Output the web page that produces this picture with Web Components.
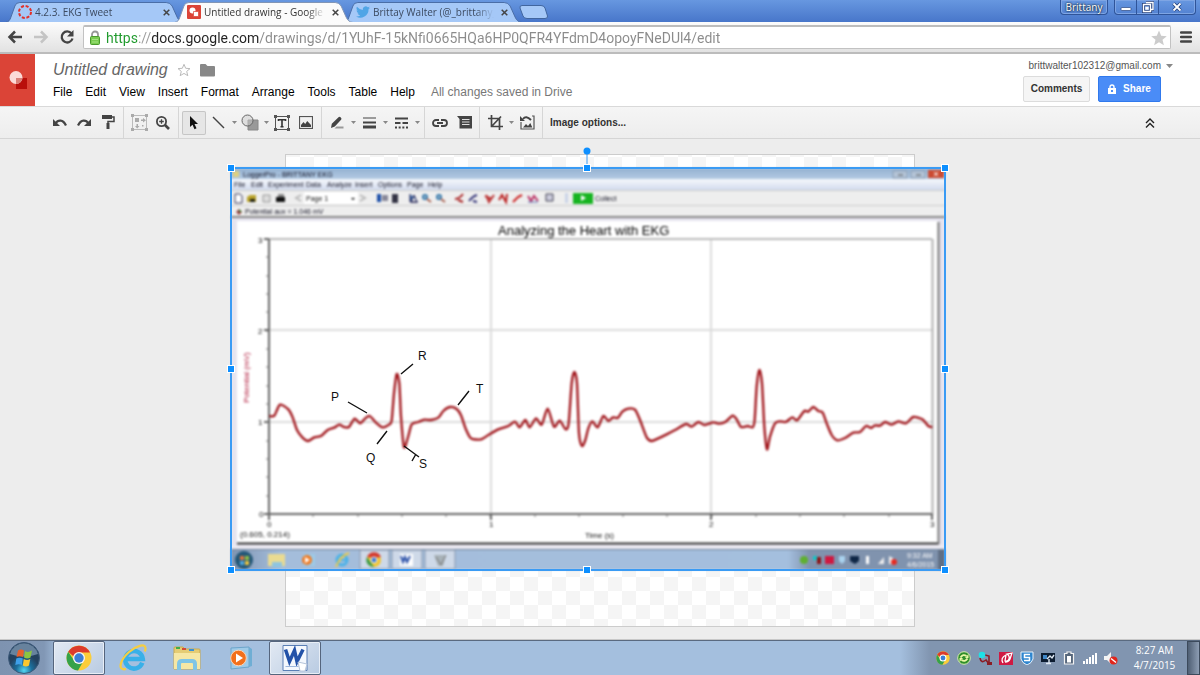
<!DOCTYPE html>
<html lang="en">
<head>
<meta charset="utf-8">
<title>Untitled drawing - Google Drawings</title>
<style>
  html, body { margin: 0; height: 100%; }
  body { font-family: "Liberation Sans", Arial, sans-serif; background: #eee; overflow: hidden; }
</style>
</head>
<body>
<desktop-screen></desktop-screen>

<script>
const define = (name, html, setup) => {
  const template = document.createElement('template');
  template.innerHTML = html;
  customElements.define(name, class extends HTMLElement {
    constructor() {
      super();
      this.attachShadow({ mode: 'open' }).append(template.content.cloneNode(true));
    }
    connectedCallback() { if (setup) setup(this, this.shadowRoot); }
  });
};

const base = `*,:host{box-sizing:border-box} button{font:inherit;color:inherit;background:none;border:0;padding:0;margin:0} svg{display:block}`;

/* ---------- browser chrome ---------- */
define('browser-tab', `
<style>${base}
:host{display:block;position:relative;width:178px;height:20px;margin-right:-9px;color:#3c4a60;z-index:1}
:host([active]){z-index:2;color:#333}
.shape{position:absolute;inset:0;width:100%;height:100%}
.shape path{fill:#a5c8f7;stroke:#4a6da6}
:host([active]) .shape path{fill:#fbfbfb;stroke:#8094b5}
.row{position:relative;display:flex;align-items:center;height:100%;padding:0 11px 0 12px;gap:3px}
::slotted(svg){display:block;width:14px;height:14px;flex:none}
.t{flex:1;min-width:0;font-size:10px;line-height:18px;white-space:nowrap;overflow:hidden;text-align:left;
 -webkit-mask-image:linear-gradient(90deg,#000 85%,transparent);}
.x{width:14px;height:14px;display:grid;place-items:center;flex:none}
</style>
<svg class="shape" viewBox="0 0 180 20" preserveAspectRatio="none"><path d="M-1 20.5C3 20 4 18 5 15L9 4Q10 .5 14 .5H162Q166 .5 168 4L173 15Q175 20 180 20.5"/></svg>
<div class="row"><slot name="icon"></slot><button class="t" role="tab"><slot></slot></button>
<button class="x" aria-label="Close tab"><svg width="7" height="7" viewBox="0 0 7 7"><path d="M.7.7l5.6 5.6M6.3.7L.7 6.3" stroke="#444" stroke-width="1.5"/></svg></button></div>`);

define('browser-tabs', `
<style>${base}
:host{display:flex;height:22px;padding:2px 4px 0 6px;background:linear-gradient(#6797e0,#4876ca);font-family:"Open Sans","Noto Sans",sans-serif}
.new{width:30px;height:14px;margin:3px 0 0 6px;position:relative;z-index:3}
.win{margin-left:auto;display:flex;gap:6px;height:13px;margin-top:-2px;color:#fff;font-size:10px;line-height:15px}
.user,.ctl{height:15px;border:1px solid #2f5499;border-top:0;border-radius:0 0 4px 4px;box-shadow:inset 0 0 0 1px #7ea5e4}
.user{width:48px;text-align:center;text-shadow:0 0 2px #123,0 0 2px #123}
.ctl{display:flex}
.ctl button{width:22px;height:14px;display:grid;place-items:center;border-right:1px solid #2f5499}
.ctl button:last-child{width:36px;border:0}
</style>
<browser-tab><svg slot="icon" viewBox="0 0 14 14"><circle cx="7" cy="7" r="6" fill="none" stroke="#e2302a" stroke-width="2" stroke-dasharray="3 1.7"/></svg>4.2.3. EKG Tweet</browser-tab>
<browser-tab active><svg slot="icon" viewBox="0 0 14 14"><rect width="14" height="14" rx="1" fill="#db4437"/><circle cx="5.5" cy="5.5" r="3" fill="#fff"/><path d="M6.5 6.5h5v5h-5z" fill="#fff" stroke="#db4437" stroke-width=".7"/></svg>Untitled drawing - Google Drawings</browser-tab>
<browser-tab><svg slot="icon" viewBox="0 0 24 24"><path fill="#50a5e6" d="M24 4.6a10 10 0 0 1-2.8.8 5 5 0 0 0 2.1-2.7 10 10 0 0 1-3.1 1.2 4.9 4.9 0 0 0-8.4 4.5A14 14 0 0 1 1.7 3.1a4.9 4.9 0 0 0 1.5 6.6 5 5 0 0 1-2.2-.6 4.9 4.9 0 0 0 3.9 4.9 5 5 0 0 1-2.2.1 4.9 4.9 0 0 0 4.6 3.4A9.900 9.900 0 0 1 0 19.500a14 14 0 0 0 21.500-12.400A10 10 0 0 0 24 4.600z"/></svg>Brittay Walter (@_brittany_w)</browser-tab>
<button class="new" aria-label="New tab"><svg width="30" height="14" viewBox="0 0 30 14"><path d="M3 .5H22Q25 .5 26 3L28.500 11Q29 13.500 26 13.500H8Q5 13.500 4 11L1 3Q.5.5 3 .5z" fill="#a5c8f7" stroke="#41669f"/></svg></button>
<div class="win"><button class="user">Brittany</button><div class="ctl">
<button aria-label="Minimize"><svg width="12" height="12"><rect x="1" y="6.500" width="10" height="3" rx="1" fill="#fff" stroke="#2a4680" stroke-width=".7"/></svg></button>
<button aria-label="Restore"><svg width="12" height="12"><path d="M4 1.500h7v7H9M1.500 3.500h7v7h-7z" fill="none" stroke="#26427c" stroke-width="3"/><path d="M4 1.500h7v7H9M1.500 3.500h7v7h-7zM4 6.500h2v1.500H4z" fill="none" stroke="#fff" stroke-width="1.400"/></svg></button>
<button aria-label="Close"><svg width="10" height="10"><path d="M1.500 1.500l7 7M8.500 1.500l-7 7" stroke="#26427c" stroke-width="3.400"/><path d="M1.500 1.500l7 7M8.500 1.500l-7 7" stroke="#fff" stroke-width="1.800"/></svg></button></div></div>`);

define('address-bar', `
<style>${base}
:host{display:flex;align-items:center;height:32px;padding:0 8px 0 7px;background:linear-gradient(#fcfcfc,#e2e2e2);border-bottom:2px solid #bcbcbc}
nav{display:flex;gap:10px;margin-right:8px}
.box{flex:1;display:flex;align-items:center;height:24px;background:#fff;border:1px solid #c2c2c2;border-top:2px solid #bdbdbd;border-radius:2px;padding:0 3px 0 5px;gap:4px}
input{flex:1;min-width:0;border:0;outline:0;padding:0 0 0 1px;height:20px;font:14px/20px Roboto,"Open Sans",sans-serif;color:transparent;
 background:linear-gradient(90deg,#1f9a2c 33px,#999 33px 46px,#222 46px 154px,#8b8b8b 154px);-webkit-background-clip:text;background-clip:text}
.menu{width:12px;height:12px;margin-left:9px}
</style>
<nav>
<button aria-label="Back"><svg width="16" height="16"><path d="M15 8H3M8 2.500L2.500 8 8 13.500" fill="none" stroke="#444" stroke-width="2.500"/></svg></button>
<button aria-label="Forward"><svg width="16" height="16"><path d="M1 8h12M8 2.500L13.500 8 8 13.500" fill="none" stroke="#c4c4c4" stroke-width="2.500"/></svg></button>
<button aria-label="Reload"><svg width="16" height="16"><path d="M12.500 4.500A5.500 5.500 0 1 0 13.500 9.500" fill="none" stroke="#444" stroke-width="2.300"/><path d="M14.500 1v6.500H8z" fill="#444"/></svg></button></nav>
<div class="box"><svg width="12" height="16"><path d="M3 8V4.500a3 3 0 0 1 6 0V8" fill="none" stroke="#999" stroke-width="1.800"/><rect x="1.500" y="6.500" width="9" height="8" rx="1" fill="#79cc50" stroke="#4b9a2d"/><path d="M3 9.500h6M3 12h6" stroke="#a5e283"/></svg>
<input type="text" aria-label="Address" value="https://docs.google.com/drawings/d/1YUhF-15kNfi0665HQa6HP0QFR4YFdmD4opoyFNeDUl4/edit">
<button aria-label="Bookmark"><svg width="16" height="16" viewBox="0 0 16 16"><path d="M8 .5l2.200 5.300 5.600.4-4.300 3.600 1.400 5.500L8 12.300l-4.900 3 1.400-5.500L.2 6.200l5.600-.4z" fill="#ccc"/></svg></button></div>
<button class="menu" aria-label="Browser menu"><svg width="12" height="12"><path d="M1 1.500h10M1 6h10M1 10.500h10" stroke="#444" stroke-width="2.500" stroke-linecap="round"/></svg></button>`);

/* ---------- editor header ---------- */
define('editor-header', `
<style>${base}
:host{display:flex;height:52px;background:#fff}
.logo{width:35px;background:#db4437;display:grid;place-items:center}
.mid{padding:6px 0 0 18px;flex:1;min-width:0}
.name{display:flex;align-items:center;height:20px;gap:9px}
h1{margin:0;font-size:16px;line-height:20px;font-weight:400;font-style:italic;color:#666}
.menus{display:flex;align-items:center;gap:13px;height:24px;font-size:12px;line-height:16px;color:#000;white-space:nowrap}
.menus span{color:#777;padding-left:3px}
.side{display:flex;flex-direction:column;align-items:flex-end;padding:5px 39px 0 0}
.acct{display:flex;align-items:center;gap:5px;height:14px;font-size:10px;line-height:14px;color:#555;margin-right:-12px}
.btns{display:flex;gap:8px;margin-top:3px}
.btns button{height:26px;border-radius:2px;font-size:10px;font-weight:700;line-height:24px}
.btns .c{width:67px;border:1px solid #dcdcdc;background:#f5f5f5;color:#333}
.btns .s{width:63px;border:1px solid #3079ed;background:#4a8cf7;color:#fff;display:flex;align-items:center;justify-content:center;gap:7px}
</style>
<div class="logo"><svg width="20" height="20" viewBox="0 0 20 20"><rect x="8" y="8" width="11" height="11" fill="#b90f0b"/><circle cx="8" cy="7.500" r="6.500" fill="#fbdad7"/><path d="M8 8h6.500A6.500 6.500 0 0 1 8 14z" fill="#d98078"/></svg></div>
<div class="mid"><div class="name"><h1>Untitled drawing</h1>
<button aria-label="Star"><svg width="14" height="14" viewBox="0 0 14 14"><path d="M7 1.300l1.700 4 4.300.3-3.300 2.800 1.100 4.300L7 10.400l-3.800 2.300 1.100-4.300L1 5.600l4.300-.3z" fill="none" stroke="#bbb"/></svg></button>
<button aria-label="Folder"><svg width="15" height="13"><path d="M0 1Q0 0 1 0h4.500l2 2H14q1 0 1 1v8.500q0 1-1 1H1q-1 0-1-1z" fill="#888"/></svg></button></div>
<div class="menus"><button>File</button><button>Edit</button><button>View</button><button>Insert</button><button>Format</button><button>Arrange</button><button>Tools</button><button>Table</button><button>Help</button><span>All changes saved in Drive</span></div></div>
<div class="side"><button class="acct">brittwalter102312@gmail.com <svg width="7" height="4"><path d="M0 0h7L3.500 4z" fill="#888"/></svg></button>
<div class="btns"><button class="c">Comments</button><button class="s"><svg width="8" height="10"><path d="M2 5V3a2 2 0 0 1 4 0v2" fill="none" stroke="#fff" stroke-width="1.400"/><path fill-rule="evenodd" d="M0 4h8v6H0zM3 6h2v2H3z" fill="#fff"/></svg>Share</button></div></div>`);

/* ---------- toolbar ---------- */
define('tool-button', `
<style>${base}
:host{display:flex;height:24px}
button{width:24px;height:24px;display:grid;place-items:center;border-radius:2px}
:host([pressed]) button{background:#e6e6e6;box-shadow:inset 0 0 0 1px #c6c6c6}
.caret{display:none;width:8px}
:host([menu]) .caret{display:grid}
</style><button class="main"><slot></slot></button><button class="caret" aria-label="More"><svg width="5" height="3"><path d="M0 0h5L2.500 3z" fill="#888"/></svg></button>`,
(el, root) => root.querySelector('.main').setAttribute('aria-label', el.getAttribute('label')));

define('tool-group', `<style>:host{display:flex;align-items:center;height:100%;padding:0 3px;border-right:1px solid #d6d6d6}</style><slot></slot>`);

define('editor-toolbar', `
<style>${base}
:host{display:flex;align-items:center;height:33px;padding-left:45px;background:linear-gradient(#f5f5f5,#ededed);border-top:1px solid #d9d9d9;border-bottom:1px solid #d5d5d5;color:#333}
.opts{margin-left:7px;font-size:10px;font-weight:700;line-height:24px}
.up{margin:0 45px 0 auto}
</style>
<tool-group>
<tool-button label="Undo"><svg width="14" height="10" viewBox="0 0 14 10"><path d="M2.500 5.500C5 1.500 10 1.200 13 7.500" fill="none" stroke="#444" stroke-width="2.300"/><path d="M0 1v7h7z" fill="#444"/></svg></tool-button>
<tool-button label="Redo"><svg width="14" height="10" viewBox="0 0 14 10"><path d="M11.500 5.500C9 1.500 4 1.200 1 7.500" fill="none" stroke="#444" stroke-width="2.300"/><path d="M14 1v7H7z" fill="#444"/></svg></tool-button>
<tool-button label="Paint format"><svg width="14" height="15" viewBox="0 0 14 15"><path d="M1 0h10v4H1z" fill="#444"/><path d="M11 2h2v4.500H7V9" fill="none" stroke="#444" stroke-width="1.500"/><path d="M5.500 8h3v6h-3z" fill="#444"/></svg></tool-button>
</tool-group>
<tool-group>
<tool-button label="Zoom to fit"><svg width="17" height="17" viewBox="0 0 17 17"><rect x="1.500" y="1.500" width="14" height="14" fill="none" stroke="#bbb"/><path d="M0 0h3v3H0zM14 0h3v3h-3zM0 14h3v3H0zM14 14h3v3h-3zM4 4h4v4H4zM10 5.500h2V4l3 2.200-3 2.200V7h-2zM5.500 10H7v2h1.500L6.200 14.500 4 12h1.500zM11 11h1.500v1.500H11z" fill="#aaa"/></svg></tool-button>
<tool-button label="Zoom"><svg width="14" height="14" viewBox="0 0 14 14"><circle cx="5.500" cy="5.500" r="4.600" fill="none" stroke="#444" stroke-width="1.800"/><path d="M9 9l4 4" stroke="#444" stroke-width="2.600"/><path d="M3.200 5.500h4.600M5.500 3.200v4.600" stroke="#444" stroke-width="1.300"/></svg></tool-button>
</tool-group>
<tool-group>
<tool-button label="Select" pressed><svg width="10" height="14" viewBox="0 0 10 14"><path d="M1 0v11l2.500-2.300 2 4.500 2-.9-2-4.300H9z" fill="#111"/></svg></tool-button>
<tool-button label="Line" menu><svg width="13" height="13"><path d="M1 1l11 11" stroke="#444" stroke-width="1.400"/></svg></tool-button>
<tool-button label="Shape" menu><svg width="18" height="17" viewBox="0 0 18 17"><path d="M7 6h10v10H7z" fill="#999" stroke="#888"/><circle cx="6.500" cy="6.500" r="5.500" fill="#ccc" fill-opacity=".5" stroke="#666"/></svg></tool-button>
<tool-button label="Text box"><svg width="16" height="16" viewBox="0 0 16 16"><rect x="1.500" y="1.500" width="13" height="13" fill="none" stroke="#555"/><path d="M0 0h3v3H0zM13 0h3v3h-3zM0 13h3v3H0zM13 13h3v3h-3z" fill="#555"/><path d="M4.500 6V4.700h7V6M8 4.500V12M6.500 11.700h3" fill="none" stroke="#333" stroke-width="1.600"/></svg></tool-button>
<tool-button label="Image"><svg width="14" height="13" viewBox="0 0 14 13"><rect x=".5" y=".5" width="13" height="12" fill="none" stroke="#555" stroke-width="1.200"/><path d="M2 11V9l2.500-3 1.700 2 2-3L12 9v2z" fill="#444"/></svg></tool-button>
</tool-group>
<tool-group>
<tool-button label="Line color" menu><svg width="14" height="14" viewBox="0 0 14 14"><path d="M1 12l.8-4.200L8.500 1.200q1-1 2.300.2t.3 2.400L4.800 10.500z" fill="#444"/><path d="M6.500 10.500h7v2h-9z" fill="#999"/></svg></tool-button>
<tool-button label="Line weight" menu><svg width="13" height="12"><path d="M0 1h13M0 5.500h13M0 10h13" stroke="#444"/><path d="M0 5.500h13" stroke="#444" stroke-width="2"/><path d="M0 10h13" stroke="#444" stroke-width="3"/></svg></tool-button>
<tool-button label="Line dash" menu><svg width="13" height="12"><path d="M0 1.500h13" stroke="#444" stroke-width="2"/><path d="M0 6h13" stroke="#444" stroke-width="2" stroke-dasharray="5.500 2"/><path d="M0 10.500h13" stroke="#444" stroke-width="2" stroke-dasharray="2 1.670"/></svg></tool-button>
</tool-group>
<tool-group>
<tool-button label="Insert link"><svg width="16" height="8" viewBox="0 0 16 8"><path d="M7 1H4a3 3 0 0 0 0 6h3M9 1h3a3 3 0 0 1 0 6H9M5 4h6" fill="none" stroke="#444" stroke-width="1.800"/></svg></tool-button>
<tool-button label="Add comment"><svg width="15" height="13" viewBox="0 0 15 13"><path d="M0 0h15v12.500H2.500V3z" fill="#444"/><path d="M5 3.500h7.500M5 6h7.500M5 8.500h7.500" stroke="#ddd"/></svg></tool-button>
</tool-group>
<tool-group>
<tool-button label="Crop" menu><svg width="15" height="15" viewBox="0 0 15 15"><path d="M3.500 0v11.500H15M0 3.500h11.500V15M4 11l9-9.500" fill="none" stroke="#444" stroke-width="1.700"/></svg></tool-button>
<tool-button label="Reset image"><svg width="15" height="15" viewBox="0 0 15 15"><path d="M12 1h2v13H1V7" fill="none" stroke="#555" stroke-width="1.200"/><path d="M3 4q3-4 8 1" fill="none" stroke="#444" stroke-width="2"/><path d="M0 1v5h5zM3 12.500L6 9l2 2 2.300-3 2 4.500z" fill="#444"/></svg></tool-button>
</tool-group>
<button class="opts">Image options...</button>
<button class="up" aria-label="Hide the menus"><svg width="10" height="10"><path d="M1 5l4-4 4 4M1 9.500l4-4 4 4" fill="none" stroke="#222" stroke-width="1.400"/></svg></button>`);

/* ---------- drawing canvas ---------- */
const TRACE = `133,258 148,257 165,224 190,238 203,262 216,300 232,322 249,333 268,322 288,318 308,300 328,293 343,284 357,291 372,291 389,266 405,280 420,266 434,258 452,277 473,292 492,284 500,272 507,190 515,132 523,160 528,260 537,352 550,318 560,283 580,276 598,269 618,270 640,263 655,243 675,231 695,237 708,256 722,296 738,325 768,328 790,315 820,298 850,288 870,275 884,292 901,270 914,292 933,265 950,284 968,236 987,290 1004,272 1022,298 1031,280 1040,160 1048,126 1056,160 1062,310 1071,348 1081,330 1090,295 1102,274 1118,292 1135,258 1150,273 1164,262 1178,264 1192,245 1210,236 1230,239 1245,270 1265,322 1280,333 1300,325 1325,313 1350,300 1383,282 1400,290 1420,276 1438,285 1465,277 1483,281 1502,275 1523,257 1535,268 1548,291 1568,288 1583,292 1589,270 1595,170 1603,120 1611,160 1618,290 1626,358 1635,320 1650,280 1665,274 1682,276 1702,262 1716,271 1738,243 1750,245 1765,231 1780,243 1793,248 1805,280 1820,315 1837,331 1860,324 1885,308 1905,306 1923,288 1938,294 1950,286 1965,287 1980,276 2000,284 2020,274 2043,280 2065,261 2092,268 2110,288 2122,292`;

/* Catmull-Rom style curve through the sampled points. */
const smooth = text => {
  const p = text.split(' ').map(s => s.split(',').map(Number));
  let d = `M${p[0]}`;
  for (let i = 0; i < p.length - 1; i++) {
    const [a, b] = [p[Math.max(i - 1, 0)], p[i]], [c, e] = [p[i + 1], p[Math.min(i + 2, p.length - 1)]];
    d += `C${b[0] + (c[0] - a[0]) / 8},${b[1] + (c[1] - a[1]) / 8} ${c[0] - (e[0] - b[0]) / 8},${c[1] - (e[1] - b[1]) / 8} ${c}`;
  }
  return d;
};
const ticks = () => {
  let d = '';
  for (let i = 1; i < 15; i++) d += `M266 ${514 - Math.round(i * 275 / 15)}h3`;
  for (let i = 1; i < 15; i++) d += `M${269 + Math.round(i * 664 / 15)} 514v3`;
  return d;
};

define('ekg-picture', `
<style>:host{display:block;position:relative} .pic{display:block;width:100%;height:100%}
.shot{overflow:hidden;filter:blur(1px)}
.marks{position:absolute;inset:0;overflow:visible}
text{font-family:"Liberation Sans",Arial,sans-serif}</style>
<svg class="pic shot" viewBox="231 168 714 402" role="img" aria-label="EKG plot">
<defs>
<linearGradient id="tb" x2="0" y2="1"><stop stop-color="#93b0d0"/><stop offset="1" stop-color="#b3cae3"/></linearGradient>
<linearGradient id="mb" x2="0" y2="1"><stop stop-color="#f6f8fc"/><stop offset="1" stop-color="#d2dbee"/></linearGradient>
<linearGradient id="bar"><stop stop-color="#8095b2"/><stop offset=".07" stop-color="#a4bddb"/><stop offset=".78" stop-color="#a4bfde"/><stop offset=".81" stop-color="#8093ae"/><stop offset="1" stop-color="#8093ae"/></linearGradient>
</defs>
<path d="M231 168h714v402H231z" fill="#e6e4ef"/>
<path d="M231 168h714v11H231z" fill="url(#tb)"/><path d="M231 179h714v11H231z" fill="url(#mb)"/>
<path d="M231 190h714v27H231z" fill="#eee"/><path d="M231 190.500h714M231 205.500h714" stroke="#ccc"/><path d="M231 217h714" stroke="#888" stroke-width="2"/>
<path d="M893 171h14v7h-14zM911 171h14v7h-14z" fill="#b5c5d8" stroke="#8b9db2"/><path d="M928 170h16v8h-16z" fill="#cc4b32"/><path d="M898 175h5M916 175h5" stroke="#555"/><path d="M934 172l4 4m0-4l-4 4" stroke="#fff"/>
<path d="M233 171h6v6h-6z" fill="#ddd080"/>
<g font-size="7" fill="#112"><text x="243" y="177">LoggerPro - BRITTANY EKG</text>
<text x="234" y="187">File</text><text x="251" y="187">Edit</text><text x="268" y="187">Experiment</text><text x="306" y="187">Data</text><text x="327" y="187">Analyze</text><text x="355" y="187">Insert</text><text x="378" y="187">Options</text><text x="407" y="187">Page</text><text x="428" y="187">Help</text>
<text x="595" y="201">Collect</text><text x="245" y="214">Potential aux = 1.046 mV</text></g>
<path d="M304 192h54v12h-54z" fill="#fff"/><text x="306" y="201" font-size="7" fill="#111">Page 1</text><path d="M351 198h4l-2 2z"/>
<path d="M235 194h5l2 2v7h-7z" fill="#fff" stroke="#335"/><path d="M247 197l3-2h6v7h-9z" fill="#baa32a"/><path d="M250 199h5v3h-5z" fill="#221"/>
<path d="M263 195h7v7h-7z" fill="#ddd" stroke="#999"/><path d="M276 197h9v5h-9z" fill="#111"/><path d="M278 194h6v3h-6z" fill="#888"/>
<path d="M301 195l-5 3 5 3M360 195l5 3-5 3" fill="none" stroke="#bbb" stroke-width="2"/>
<path d="M377 194h4v8h-4z" fill="#1d4fa8"/><path d="M382 195h6v6h-6z" fill="#889"/><path d="M392 194h6v9h-6z" fill="#334"/>
<path d="M410 194v8h8M411 202l3-7 3 7z" fill="#36a" stroke="#225"/>
<g fill="none" stroke="#a65" stroke-width="2"><circle cx="425" cy="197" r="2" stroke="#37a"/><path d="M427 199l4 3"/><circle cx="439" cy="197" r="2" stroke="#37a"/><path d="M441 199l4 3"/></g>
<g fill="none" stroke-width="2"><path d="M455 199q4 0 8-5m-5 6l5 2" stroke="#a22"/><path d="M469 201q4-5 8-6m-4 6l4 1" stroke="#337"/><path d="M486 195l3 7 5-7m-9 1l7 3" stroke="#b33"/><path d="M499 200l3-5 4 7 1-8" stroke="#b22"/><path d="M513 202l5-5 4-2" stroke="#c22"/><path d="M528 196l3 5 3-5 4 5" stroke="#b36"/></g>
<path d="M528 202h10" stroke="#56a"/><path d="M546 194h7v7h-7z" fill="#ccd" stroke="#445"/>
<path d="M565 193h3v10h-3z" fill="#cbd5e8"/><path d="M573 193h20v11h-20z" fill="#17b421"/><path d="M581 195l5 3-5 3z" fill="#fff"/>
<path d="M236 212l3-3 3 3-3 3z" fill="#943e3e"/><path d="M239 209l3 3h-3z" fill="#3a8a3a"/>
<path d="M237 221h701v322H237z" fill="#fff"/><path d="M237 543.500h702" stroke="#333" stroke-width="2"/><path d="M938.500 222v322" stroke="#777" stroke-width="2"/>
<path d="M269 330h663M269 422h663M491 239v275M711 239v275" stroke="#dcdcdc" stroke-width="2"/>
<path d="M269 239h663" stroke="#bbb" stroke-width="2"/><path d="M932.500 239v276" stroke="#b0b0b0" stroke-width="2"/>
<path d="M269 239v281M264 514h668M264 239h5M264 330h5M264 422h5M491 514v6M711 514v6M932 514v6" stroke="#666" stroke-width="2" fill="none"/>
<path id="ticks" stroke="#777"/>
<text x="498" y="235" font-size="13" fill="#000">Analyzing the Heart with EKG</text>
<g font-size="8" fill="#111"><text x="258" y="243">3</text><text x="258" y="334">2</text><text x="258" y="425">1</text><text x="259" y="517">0</text>
<text x="267" y="527">0</text><text x="489" y="527">1</text><text x="709" y="527">2</text><text x="930" y="527">3</text>
<text x="240" y="537">(0.605, 0.214)</text><text x="585" y="538">Time (s)</text>
<text transform="translate(249 403) rotate(-90)" fill="#b0183a">Potential (mV)</text></g>
<svg x="225" y="330" width="730" height="160" viewBox="0 0 2190 480"><path id="trace" fill="none" stroke="#a0141a" stroke-width="7" stroke-linejoin="round"/></svg>
<path d="M231 545h714v4H231z" fill="#eceaf2"/>
<path d="M231 549h714v21H231z" fill="url(#bar)"/><path d="M231 549.500h714" stroke="#6e8199"/>
<path d="M360 550h29v19h-29zM392 550h30v19h-30zM425 550h30v19h-30z" fill="#ced9e8" stroke="#8898ae"/>
<circle cx="244" cy="560" r="9" fill="#245777"/><path d="M240 556h4v4h-4z" fill="#e2763a"/><path d="M245 556h4v4h-4z" fill="#8fbe45"/><path d="M240 561h4v4h-4z" fill="#4fa8df"/><path d="M245 561h4v4h-4z" fill="#edc541"/>
<path d="M268 554h17v12h-17z" fill="#eadb91"/><path d="M272 562h10v5h-10z" fill="#8ec5e0"/>
<path d="M303 554h12v12h-12z" fill="#9ccae8"/><circle cx="307" cy="560" r="5" fill="#f07a22"/><path d="M305 557l5 3-5 3z" fill="#fff"/>
<circle cx="342" cy="560" r="5" fill="none" stroke="#4ab2e8" stroke-width="3"/><path d="M339 560h7" stroke="#4ab2e8" stroke-width="2"/><path d="M336 567Q340 556 349 553" fill="none" stroke="#e9c94b" stroke-width="2"/>
<circle cx="374" cy="560" r="7" fill="#f1c430"/><path d="M367 557a7.500 7.500 0 0 1 14 0l-7 1z" fill="#d43a2d"/><path d="M367 557l7 10a7 7 0 0 1-7-10" fill="#3d9a45"/><circle cx="374" cy="560" r="3" fill="#3c79d0" stroke="#fff"/>
<path d="M400 554h13v12h-13z" fill="#fff"/><path d="M401 556l2 6 2-5 2 5 3-6" fill="none" stroke="#2a50a8" stroke-width="2"/>
<path d="M434 555h12l-3 11h-5z" fill="#a8b2b8"/><path d="M436 557l5 8 5-10" stroke="#777" fill="none"/>
<circle cx="804" cy="560" r="4" fill="#5fb030"/><path d="M813 556h4v4h-4z" fill="#13c5c5"/><path d="M817 557h4v7h-4z" fill="#8c1418"/><path d="M825 556h9v8h-9z" fill="#d01840"/><path d="M839 556h6v5l-3 3-3-3z" fill="#a9d2ee"/><path d="M850 556h9v5l-4 3-5-3z" fill="#0f2645"/><path d="M866 556h3v8h-3z" fill="#fff"/><path d="M878 564l6-7v7z" fill="#eee"/><path d="M889 556l4 2v6h-4z" fill="#eee"/><circle cx="894" cy="562" r="3" fill="#e82a20"/>
<g font-size="7" fill="#fff"><text x="907" y="558">9:32 AM</text><text x="907" y="567">4/6/2015</text></g><path d="M938 550h7v20h-7z" fill="#606f84"/>
</svg>
<svg class="pic marks" viewBox="231 168 714 402">
<g stroke="#111" stroke-width="1.400"><path d="M348 402l19 11M401 374l12-10M458 405l11-14M377 444l10-13M404 446l15 11M412 461l4-7"/></g>
<g font-size="12" fill="#111"><text x="331" y="401">P</text><text x="418" y="360">R</text><text x="476" y="393">T</text><text x="366" y="462">Q</text><text x="419" y="468">S</text></g>
<path d="M587 151v17" stroke="#3a9bf4" stroke-width="1"/><rect x="231" y="168" width="714" height="402" fill="none" stroke="#3a9bf4" stroke-width="2"/>
<circle cx="587" cy="151" r="3.500" fill="#0d8fff"/>
<g id="handles" fill="#0d8fff" stroke="#fff"></g>
</svg>`,
(el, root) => {
  root.getElementById('trace').setAttribute('d', smooth(TRACE));
  root.getElementById('ticks').setAttribute('d', ticks());
  root.getElementById('handles').innerHTML = [[231,168],[587,168],[945,168],[231,369],[945,369],[231,570],[587,570],[945,570]]
    .map(([x, y]) => `<rect x="${x - 3.5}" y="${y - 3.5}" width="7" height="7"/>`).join('');
});

define('drawing-stage', `
<style>${base}
:host{display:flex;justify-content:center;align-items:flex-start;padding-top:15px;background:#ededed;border-bottom:1px solid #c8c8c8;overflow:hidden}
.board{position:relative;flex:none;width:630px;height:473px;border:1px solid #ccc;background:repeating-conic-gradient(#f5f5f5 0 25%,#fff 0 50%) 0 2px/28px 28px}
ekg-picture{position:absolute;left:-55px;top:13px;width:714px;height:402px}
</style><div class="board"><ekg-picture></ekg-picture></div>`);

/* ---------- taskbar ---------- */
define('task-item', `
<style>${base}
:host{display:block;width:52px;height:34px}
button{width:100%;height:100%;display:grid;place-items:center}
:host([open]) button{background:linear-gradient(135deg,#e2e9f3,#b9cbe2);border:1px solid #55657d;border-radius:2px;box-shadow:inset 0 0 0 1px #e8eef6}
</style><button><slot></slot></button>`,
(el, root) => root.querySelector('button').setAttribute('aria-label', el.getAttribute('label')));

define('desktop-taskbar', `
<style>${base}
:host{display:flex;height:35px;border-top:1px solid #5a6a80;background:linear-gradient(90deg,#7e93b0 0,#8197b5 44px,#a4bfde 60px,#a4bfde calc(100% - 300px),#8195b0 calc(100% - 270px),#8195b0);font-family:"Open Sans","Noto Sans",sans-serif}
.start{width:48px;display:grid;place-items:center}
.items{display:flex;gap:2px;padding-left:5px}
.tray{margin-left:auto;display:flex;align-items:center;gap:7px}
.clock{width:51px;margin-left:4px;text-align:center;font-size:10px;line-height:15px;color:#fff}
.show{width:13px;height:34px;background:linear-gradient(90deg,#4f5f74,#8d9db3);border:1px solid #3c4a5c}
</style>
<button class="start" aria-label="Start"><svg width="34" height="34" viewBox="0 0 34 34"><defs><radialGradient id="o" cy=".9"><stop stop-color="#53d7f2"/><stop offset=".5" stop-color="#1c6f9c"/><stop offset="1" stop-color="#24415f"/></radialGradient></defs><circle cx="17" cy="17" r="15.500" fill="url(#o)" stroke="#3d5a7a"/><path d="M3 13a14.500 14.500 0 0 1 28 0q-14 5-28 0" fill="#9fb8cf" opacity=".55"/><path d="M11 9.500q3-2 6 0l-1 6.500q-3-1.500-6.500 0z" fill="#e8612c"/><path d="M18 10q3 2 7-.5l-1.500 7q-3 2-6.500 0z" fill="#8cc63f"/><path d="M9.300 17.500q3-1.700 6.500 0l-1 6.500q-3-1.700-6.500 0z" fill="#3f9fe8"/><path d="M16.800 18q3.200 1.800 6.500 0L22 24.500q-3 2-6.200 0z" fill="#fbc72e"/></svg></button>
<div class="items">
<task-item label="Chrome" open><svg width="26" height="26" viewBox="0 0 26 26"><circle cx="13" cy="13" r="12.500" fill="#fbcd3a"/><path d="M2.200 6.800A12.500 12.500 0 0 1 24 7.500H13a5.500 5.500 0 0 0-5.300 4z" fill="#dc3b2c"/><path d="M2.200 6.800A12.500 12.500 0 0 0 12 25.500l5.500-9.500a5.500 5.500 0 0 1-9.500-.5z" fill="#35a24a"/><circle cx="13" cy="13" r="6" fill="#f5f5f5"/><circle cx="13" cy="13" r="4.700" fill="#3b7ed6"/></svg></task-item>
<task-item label="Internet Explorer"><svg width="28" height="28" viewBox="0 0 28 28"><path d="M23.300 18.800A8.800 8.800 0 1 1 23.800 15H8" fill="none" stroke="#38b0e8" stroke-width="4.500"/><path d="M7 25C-2 27 1 16 10 8 17 2 26-1 26.500 4c.1 1-.2 2.300-.8 3.500" fill="none" stroke="#f3cd45" stroke-width="2.300"/></svg></task-item>
<task-item label="File Explorer"><svg width="28" height="26" viewBox="0 0 28 26"><path d="M1 3q0-1 1-1h8l2 2h14q1 0 1 1v19H1z" fill="#e5cc74" stroke="#c8a94e"/><path d="M3 2h4v2H3z" fill="#3fae49"/><path d="M9 3h4v2H9z" fill="#d34a3a"/><path d="M16 4h5v2h-5z" fill="#3c93d5"/><path d="M1 8h26v16H1z" fill="#f6e7a4"/><path d="M6 25v-6q0-3 3-3h10q3 0 3 3v6" fill="none" stroke="#7fc5e6" stroke-width="4"/></svg></task-item>
<task-item label="Media Player"><svg width="26" height="24" viewBox="0 0 26 24"><path d="M3 2l18-1v20l-18 2z" fill="#9fcbe8" stroke="#6ca5cb"/><path d="M21 1l3 2v17l-3 1z" fill="#6faed4"/><circle cx="10.500" cy="12" r="7.800" fill="#f2701c" stroke="#fbd4b4"/><path d="M8 7.500l7 4.500-7 4.500z" fill="#fff"/></svg></task-item>
<task-item label="Word" open><svg width="28" height="28" viewBox="0 0 28 28"><path d="M2 1.500h24v25H2z" fill="#f4f8fd" stroke="#5a7fb5"/><path d="M4.500 5.500l4 12 5-11 2.500 11L22 5.500" fill="none" stroke="#2352a8" stroke-width="3.500"/><path d="M4.500 22.500h13" stroke="#9db7dc"/><path d="M17 18l9 2-2 7h-5z" fill="#fff" stroke="#b5c4da"/></svg></task-item>
</div>
<div class="tray">
<svg width="14" height="14" viewBox="0 0 26 26"><circle cx="13" cy="13" r="12.500" fill="#fbcd3a"/><path d="M2.200 6.800A12.500 12.500 0 0 1 24 7.500H13a5.500 5.500 0 0 0-5.300 4z" fill="#dc3b2c"/><path d="M2.200 6.800A12.500 12.500 0 0 0 12 25.500l5.500-9.500a5.500 5.500 0 0 1-9.500-.5z" fill="#35a24a"/><circle cx="13" cy="13" r="5.500" fill="#3b7ed6" stroke="#fff" stroke-width="2"/></svg>
<svg width="14" height="14"><circle cx="7" cy="7" r="6.300" fill="#2f8f2a" stroke="#d6ecb0"/><path d="M3.500 6.500Q6 2.500 9.500 5M10.500 7.500Q8 11.500 4.500 9" fill="none" stroke="#e9f7a5" stroke-width="1.800"/><path d="M11.500 3v4H8zM2.500 11V7H6z" fill="#e9f7a5"/></svg>
<svg width="14" height="14"><path d="M2 7q1 6 6 2l3 4V5L7 4" fill="none" stroke="#8b1c24" stroke-width="1.600"/><circle cx="4" cy="4" r="3.300" fill="#1fe0e6"/><path d="M9 11h5v3H9z" fill="#8b1c24"/></svg>
<svg width="14" height="14"><path d="M0 1h14v13H0z" fill="#cf1a43"/><path d="M4 12Q1 7 7 4l-1 6q3 1 4-2t-2-5l5-1q-1 3-2 6t-5 3" fill="none" stroke="#fff" stroke-width="1.300"/></svg>
<svg width="14" height="14"><path d="M1 1h12v7q-1 4-6 6Q2 12 1 8z" fill="#2f86cf" stroke="#e8f2fb"/><path d="M10 3.500H4.500v3h5v3H4" fill="none" stroke="#fff" stroke-width="1.500"/></svg>
<svg width="14" height="14"><path d="M0 2h14v9H0z" fill="#0c1c30"/><path d="M2 4h4v4H2z" fill="#3f87c8"/><path d="M6 8l3-3 2 2 2-3M5 12.500h5M8 8v4" fill="none" stroke="#dfe8f2" stroke-width="1.400"/></svg>
<svg width="14" height="14"><path d="M5 1h4v1.500h2.500V13h-9V2.500H5z" fill="#56677c" stroke="#f2f2f2" stroke-width="1.200"/><path d="M5 5h4v6.500H5z" fill="#fff"/></svg>
<svg width="14" height="14"><path d="M1 13v-3M4 13V8M7 13V6M10 13V4M13 13V2" stroke="#fff" stroke-width="2"/></svg>
<svg width="14" height="14"><path d="M0 5h3l4-4v12L3 9H0z" fill="#f4f4f4"/><circle cx="9.500" cy="9.500" r="4" fill="#e0261c"/><path d="M7 7.500l5 4" stroke="#fff" stroke-width="1.400"/></svg>
<div class="clock"><div>8:27 AM</div><div>4/7/2015</div></div>
<button class="show" aria-label="Show desktop"></button></div>`);

define('desktop-screen', `
<style>:host{display:flex;flex-direction:column;height:100vh} browser-tabs,address-bar,editor-header,editor-toolbar,desktop-taskbar{flex:none} drawing-stage{flex:1;min-height:0}</style>
<browser-tabs></browser-tabs><address-bar></address-bar><editor-header></editor-header><editor-toolbar></editor-toolbar><drawing-stage></drawing-stage><desktop-taskbar></desktop-taskbar>`);
</script>
</body>
</html>
